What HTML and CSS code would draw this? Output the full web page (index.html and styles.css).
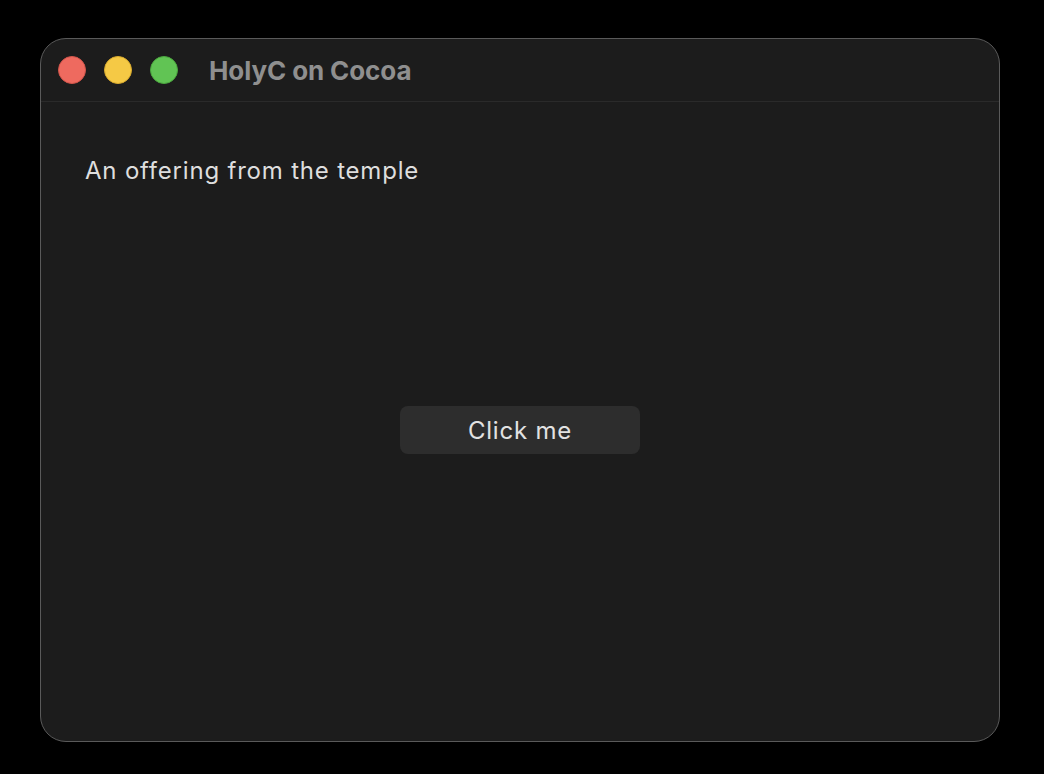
FILE: index.html
```html
<!DOCTYPE html>
<html>
<head>
<meta charset="utf-8">
<link rel="stylesheet" href="styles.css">
</head>
<body>
<div class="window">
  <div class="titlebar">
    <div class="lights">
      <span class="light red"></span>
      <span class="light yellow"></span>
      <span class="light green"></span>
    </div>
    <div class="title">HolyC on Cocoa</div>
  </div>
  <div class="content">
    <div class="label">An offering from the temple</div>
    <div class="button-row">
      <button class="button">Click me</button>
    </div>
  </div>
</div>
</body>
</html>
```
FILE: styles.css
```css
html, body {
  margin: 0;
  padding: 0;
  background: #000;
  width: 1044px;
  height: 774px;
  overflow: hidden;
  font-family: Inter, "Liberation Sans", sans-serif;
}
body {
  padding-top: 38px;
  padding-left: 40px;
  box-sizing: border-box;
}
.window {
  width: 960px;
  height: 704px;
  box-sizing: border-box;
  border: 1.5px solid #5a5a5a;
  border-radius: 26px;
  background: #1c1c1c;
  overflow: hidden;
  display: flex;
  flex-direction: column;
}
.titlebar {
  height: 62px;
  flex: none;
  border-bottom: 1px solid #2a2a2a;
  display: flex;
  align-items: center;
  padding-left: 17px;
}
.lights {
  display: flex;
  gap: 18px;
}
.light {
  width: 28px;
  height: 28px;
  border-radius: 50%;
  box-sizing: border-box;
}
.red { background: #ee6a5f; border: 1px solid #d2554b; }
.yellow { background: #f5c945; border: 1px solid #d8aa2e; }
.green { background: #61c454; border: 1px solid #4ba73e; }
.title {
  margin-left: 31px;
  color: #8f8f8f;
  font-weight: 700;
  font-size: 26px;
  letter-spacing: -0.1px;
}
.content {
  flex: 1;
  display: flex;
  flex-direction: column;
  padding: 53px 0 0 44px;
}
.label {
  color: #dedede;
  font-size: 24px;
  line-height: 32px;
  letter-spacing: 0.8px;
}
.button-row {
  margin-top: 219px;
  padding-right: 44px;
  display: flex;
  justify-content: center;
}
.button {
  width: 240px;
  height: 48px;
  border: none;
  border-radius: 8px;
  background: #2d2d2d;
  color: #e2e2e2;
  font-family: Inter, "Liberation Sans", sans-serif;
  font-size: 24px;
  letter-spacing: 0.8px;
  padding: 0;
}
```
